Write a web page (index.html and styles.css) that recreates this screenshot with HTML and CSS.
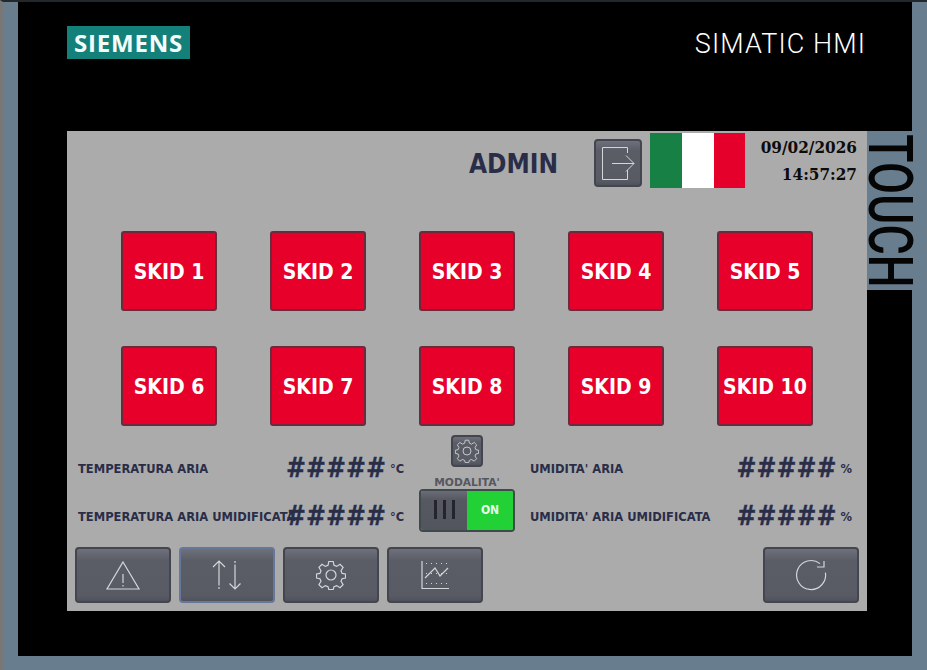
FILE: index.html
```html
<!DOCTYPE html>
<html lang="it">
<head>
<meta charset="utf-8">
<title>SIMATIC HMI</title>
<link rel="stylesheet" href="styles.css">
</head>
<body>
<div class="device">
  <div class="front">
    <header class="brand">
      <div class="logo">SIEMENS</div>
      <div class="model">SIMATIC HMI</div>
    </header>
    <div class="stage">
      <main class="panel">
        <div class="topbar">
          <div class="user">ADMIN</div>
          <button class="btn btn-logout" aria-label="Logout">
            <svg width="48" height="48" viewBox="0 0 48 48" fill="none" stroke="#d4d6da" stroke-width="1"><path d="M33.500 14V8.500H8.500V40.500H33.500V31"/><path d="M18 24.500H40M32 16.500L40 24.500L32 32.500"/></svg>
          </button>
          <div class="flag"><span class="flag-g"></span><span class="flag-w"></span><span class="flag-r"></span></div>
          <div class="clock"><div>09/02/2026</div><div>14:57:27</div></div>
        </div>
        <div class="skids">
          <button class="skid">SKID 1</button>
          <button class="skid">SKID 2</button>
          <button class="skid">SKID 3</button>
          <button class="skid">SKID 4</button>
          <button class="skid">SKID 5</button>
          <button class="skid">SKID 6</button>
          <button class="skid">SKID 7</button>
          <button class="skid">SKID 8</button>
          <button class="skid">SKID 9</button>
          <button class="skid">SKID 10</button>
        </div>
        <section class="readouts">
          <div class="group group-left">
            <div class="row"><span class="label">TEMPERATURA ARIA</span><span class="value">#####</span><span class="unit">°C</span></div>
            <div class="row"><span class="label">TEMPERATURA ARIA UMIDIFICATA</span><span class="value">#####</span><span class="unit">°C</span></div>
          </div>
          <div class="mode">
            <button class="btn btn-gear" aria-label="Impostazioni modalità">
              <svg width="24" height="24" viewBox="0 0 30 30" fill="none" stroke="#d4d6da" stroke-width="1.100"><use href="#gear"/></svg>
            </button>
            <div class="mode-label">MODALITA'</div>
            <div class="toggle">
              <div class="toggle-off"><i></i><i></i><i></i></div>
              <div class="toggle-on">ON</div>
            </div>
          </div>
          <div class="group group-right">
            <div class="row"><span class="label">UMIDITA' ARIA</span><span class="value">#####</span><span class="unit">%</span></div>
            <div class="row"><span class="label">UMIDITA' ARIA UMIDIFICATA</span><span class="value">#####</span><span class="unit">%</span></div>
          </div>
        </section>
        <nav class="nav">
          <button class="btn btn-nav" aria-label="Allarmi">
            <svg width="36" height="36" viewBox="0 0 36 36" fill="none" stroke="#d4d6da" stroke-width="1.200"><path d="M18 5L34 32H2Z"/><path d="M18 17V26M18 28V29.500"/></svg>
          </button>
          <button class="btn btn-nav btn-active" aria-label="Comunicazione">
            <svg width="36" height="36" viewBox="0 0 36 36" fill="none" stroke="#d4d6da" stroke-width="1.200"><path d="M10 32V30M10 28.500V4M4 10L10 4L16 10"/><path d="M26 4V6M26 7.500V32M20.500 26.500L26 32L31.500 26.500"/></svg>
          </button>
          <button class="btn btn-nav" aria-label="Impostazioni">
            <svg width="30" height="30" viewBox="0 0 30 30" fill="none" stroke="#d4d6da" stroke-width="1.200"><use href="#gear"/></svg>
          </button>
          <button class="btn btn-nav" aria-label="Trend">
            <svg width="30" height="30" viewBox="0 0 30 30" fill="none" stroke="#d4d6da"><path d="M2 1V28.500H29" stroke-width="1.200"/><path d="M5 18L15 8L20 16L28 8" stroke-width="1.200"/><path d="M6 3.500H28M6 13.500H28M6 23.500H28" stroke-width="1" stroke-dasharray="1 4"/></svg>
          </button>
          <button class="btn btn-nav btn-refresh" aria-label="Aggiorna">
            <svg width="32" height="32" viewBox="0 0 32 32" fill="none" stroke="#d4d6da" stroke-width="1.200"><path d="M30.400 13.700A14.500 14.500 0 1 1 25 4.600"/><path d="M29 2V8H22"/></svg>
          </button>
        </nav>
      </main>
      <aside class="side"><span class="touch">TOUCH</span></aside>
    </div>
  </div>
</div>
<svg class="defs" width="0" height="0" aria-hidden="true">
  <defs>
    <g id="gear">
      <circle cx="15" cy="15" r="5"/>
      <path d="M12.800 1.500H17.200L18 5.300L20.700 6.400L24 4.300L27.100 7.400L25 10.700L26.100 13.400L29.500 14V18L26.100 18.700L25 21.300L27.100 24.600L24 27.700L20.700 25.600L18 26.700L17.200 29.500H12.800L12 26.700L9.300 25.600L6 27.700L2.900 24.600L5 21.300L3.900 18.700L.5 18V14L3.900 13.400L5 10.700L2.900 7.400L6 4.300L9.300 6.400L12 5.300Z"/>
    </g>
  </defs>
</svg>
</body>
</html>
```
FILE: styles.css
```css
* { box-sizing: border-box; }
html, body { margin: 0; padding: 0; }
body { width: 927px; height: 670px; overflow: hidden; font-family: "DejaVu Sans", sans-serif; font-stretch: condensed; }
button { font: inherit; font-stretch: condensed; padding: 0; cursor: pointer; }
.defs { position: absolute; }

.device {
  width: 927px; height: 670px;
  padding: 0 15px 14px 15px;
  background: #687d8d;
  border-top: 2px solid #23282d;
  border-left: 3px solid #777;
}
.front { height: 654px; background: #000; padding-left: 49px; display: flex; flex-direction: column; }

.brand { height: 129px; display: flex; justify-content: space-between; align-items: flex-start; padding: 24px 46px 0 0; }
.logo {
  width: 123px; height: 33px; background: #14807a; color: #f4fcfb;
  font: 700 24px/33px "Open Sans", sans-serif; text-align: center; letter-spacing: .8px;
}
.model {
  color: #fff;
  font: 300 27px/36px Roboto, sans-serif; letter-spacing: 1.100px;
}

.stage { display: flex; align-items: flex-start; }
.panel {
  width: 800px; height: 480px; background: #ababab;
  display: flex; flex-direction: column;
  padding-top: 2px;
}

.btn {
  display: flex; align-items: center; justify-content: center;
  border: 2px solid #44464f; border-radius: 4px;
  background: linear-gradient(#6e707b, #5a5c66 22%, #585a64 90%, #50525b);
}
.topbar { height: 55px; display: flex; align-items: flex-start; justify-content: flex-end; padding-right: 10px; }
.user { margin: 14px 36px 0 0; color: #2a2d48; font-size: 26px; font-weight: 700; line-height: 34px; }
.btn-logout { width: 48px; height: 48px; margin: 6px 8px 0 0; }
.btn-logout svg { margin: -2px; }
.flag { width: 95px; height: 55px; display: flex; }
.flag-g { width: 32px; background: #168045; }
.flag-w { width: 32px; background: #fff; }
.flag-r { width: 31px; background: #e4002b; }
.clock { width: 112px; text-align: right; padding-top: 1px; color: #0c0c0c; font-family: "DejaVu Serif", serif; font-size: 17px; font-weight: 700; line-height: 27px; }

.skids {
  margin-top: 43px; padding-left: 54px;
  display: grid; grid-template-columns: repeat(5, 96px); grid-auto-rows: 80px; column-gap: 53px; row-gap: 35px;
}
.skid {
  border: 2px solid #6a2b3d; border-radius: 3px; background: #e6002a; color: #fff;
  padding-top: 2px;
  font-size: 21px; font-weight: 700; line-height: 1;
}

.readouts {
  margin-top: 9px; height: 112px; padding-left: 11px;
  display: grid; grid-template-columns: 341px 96px 337px; column-gap: 0;
}
.group { padding-top: 9px; }
.group-right { padding-left: 15px; }
.row { height: 48px; display: flex; align-items: center; }
.label { padding-top: 2px; color: #2a2d48; font-size: 11.500px; font-stretch: normal; font-weight: 700; line-height: 16px; white-space: nowrap; }
.group-left .label { width: 208px; }
.group-right .label { width: 207px; }
.value { width: 99px; color: #2a2d48; font-size: 26.500px; font-weight: 700; line-height: 1; white-space: nowrap; -webkit-text-stroke: .3px #2a2d48; }
.unit { margin-left: 5px; padding-top: 2px; color: #2a2d48; font-size: 11.500px; font-stretch: normal; font-weight: 700; line-height: 16px; }

.mode { display: flex; flex-direction: column; align-items: center; }
.btn-gear { width: 32px; height: 32px; }
.mode-label { margin-top: 9px; height: 13px; color: #55575f; font-size: 10.700px; font-stretch: normal; font-weight: 700; line-height: 13px; white-space: nowrap; }
.toggle { width: 96px; height: 43px; display: flex; border: 2px solid #3f4a4b; border-radius: 4px; overflow: hidden; }
.toggle-off { width: 46px; display: flex; justify-content: center; gap: 6px; padding-top: 9px; background: linear-gradient(#6a6c77, #565862 22%, #52545e); }
.toggle-off i { display: block; width: 3px; height: 19px; background: #24252c; }
.toggle-on { flex: 1; background: #22d135; color: #eaffea; text-align: center; font-size: 12px; font-weight: 700; line-height: 38px; }

.nav { height: 56px; display: flex; gap: 8px; padding: 0 8px; }
.btn-nav { width: 96px; height: 56px; }
.btn-active { border-color: #65779a; }
.btn-refresh { margin-left: auto; }

.side { width: 45px; height: 159px; background: #687d8d; position: relative; }
.touch {
  position: absolute; left: 50%; top: 80px;
  color: #050505; font: 500 62px/1 "Roboto", sans-serif; white-space: nowrap;
  transform: translate(-50%, -50%) rotate(90deg) scaleX(.75);
}
```
